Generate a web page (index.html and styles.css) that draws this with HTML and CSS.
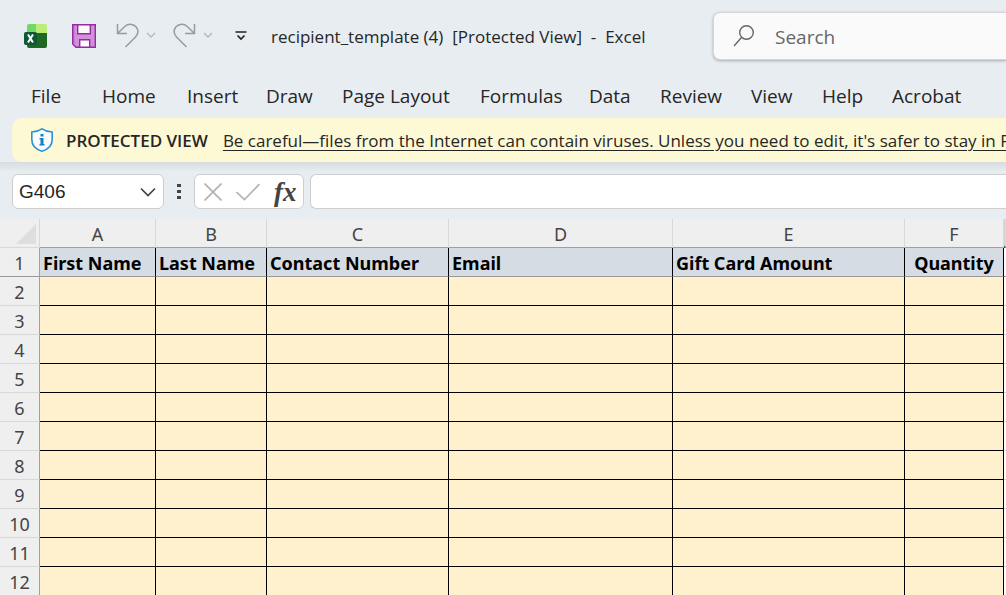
FILE: index.html
```html
<!DOCTYPE html>
<html lang="en">
<head>
<meta charset="utf-8">
<title>recipient_template (4) [Protected View] - Excel</title>
<link rel="stylesheet" href="styles.css">
</head>
<body>
<div class="app">
  <header class="titlebar">
    <div class="quick-access">
      <svg class="logo" width="24" height="24" viewBox="0 0 24 24" aria-hidden="true">
        <path d="M3 9V2q0-2 2-2h8v9z" fill="#70d866"/>
        <path d="M12 0h9q2 0 2 2v7H12z" fill="#bdec77"/>
        <path d="M3 9h20v13q0 2-2 2H5q-2 0-2-2z" fill="#1d6823"/>
        <path d="M3 9h9v3H3z" fill="#30923b"/>
        <rect x="0" y="8" width="13" height="13" rx="2" fill="#0c5837"/>
        <path d="M4 10.5l5 8M9 10.5l-5 8" stroke="#fff" stroke-width="2" fill="none"/>
      </svg>
      <button class="icon-button save" aria-label="Save">
        <svg width="24" height="24" viewBox="0 0 24 24">
          <path d="M.7.7h22.6v22.6H4L.7 20z" fill="#d28fdb" stroke="#942b9f" stroke-width="1.4"/>
          <path d="M5.7.7h12.6v9H5.7zM7.7 23.3v-7.6h10v7.6z" fill="#fafafa" stroke="#942b9f" stroke-width="1.4"/>
          <path d="M1.8 2v17.5" stroke="#b057ba"/>
        </svg>
      </button>
      <button class="icon-button undo" aria-label="Undo">
        <svg width="42" height="26" viewBox="0 0 42 26" fill="none" stroke="#989b9e" stroke-width="1.5">
          <path d="M1.5 1v9.5H11M1.5 10.5L9 3.2C12 .4 17 .5 20 3.8C22.600 7 22.200 11 19.500 14L9.500 24"/>
          <path d="M31 10l4 4 4-4" stroke="#b8bbbe"/>
        </svg>
      </button>
      <button class="icon-button redo" aria-label="Redo">
        <svg width="42" height="26" viewBox="0 0 42 26" fill="none" stroke="#989b9e" stroke-width="1.5">
          <path d="M21.500 1v9.500H12M21.500 10.500L14 3.200C11 .4 6 .5 3 3.800C.4 7 .8 11 3.500 14L13.500 24"/>
          <path d="M31 10l4 4 4-4" stroke="#b8bbbe"/>
        </svg>
      </button>
      <button class="icon-button more" aria-label="Customize Quick Access Toolbar">
        <svg width="12" height="10" viewBox="0 0 12 10" fill="none" stroke="#222" stroke-width="1.700">
          <path d="M.5 1h11M2.500 4.500L6 8l3.500-3.500"/>
        </svg>
      </button>
    </div>
    <div class="document-title">recipient_template (4)&nbsp; [Protected View]&nbsp; -&nbsp; Excel</div>
    <label class="search">
      <svg width="22" height="22" viewBox="0 0 22 22" fill="none" stroke="#666" stroke-width="1.400" aria-hidden="true">
        <circle cx="13.500" cy="7.500" r="6.800"/><path d="M8.500 12.500L1 21"/>
      </svg>
      <input type="search" placeholder="Search" aria-label="Search">
    </label>
  </header>

  <nav class="tabs" aria-label="Ribbon">
    <button>File</button><button>Home</button><button>Insert</button><button>Draw</button><button>Page Layout</button><button>Formulas</button><button>Data</button><button>Review</button><button>View</button><button>Help</button><button>Acrobat</button>
  </nav>

  <div class="notice">
    <svg width="22" height="24" viewBox="0 0 22 24" aria-hidden="true">
      <path d="M11 .8Q15.500 3.800 21.200 4v7.500C21.200 17.500 17 21.500 11 23.200C5 21.500.8 17.500.8 11.500V4Q6.500 3.800 11 .8z" fill="#fafcfd" stroke="#2a92d2" stroke-width="1.600"/>
      <path d="M9.500 6h3v2.500h-3zM8.500 10h4v7h-3v-5.500h-1zM8.500 16h5v1.500h-5z" fill="#1680c6"/>
    </svg>
    <strong>PROTECTED VIEW</strong>
    <a href="#protected-view">Be careful—files from the Internet can contain viruses. Unless you need to edit, it's safer to stay in Protected View.</a>
  </div>

  <div class="formula-bar">
    <label class="name-box">
      <input type="text" value="G406" aria-label="Name box">
      <svg width="16" height="10" viewBox="0 0 16 10" fill="none" stroke="#444" stroke-width="1.700" aria-hidden="true"><path d="M1 1.500l7 7 7-7"/></svg>
    </label>
    <svg class="grip" width="4" height="16" viewBox="0 0 4 16" fill="#444" aria-hidden="true"><path d="M0 0h4v3H0zM0 6h4v3H0zM0 12h4v3H0z"/></svg>
    <div class="formula-actions">
      <button aria-label="Cancel"><svg width="18" height="18" viewBox="0 0 18 18" fill="none" stroke="#b2b2b2" stroke-width="1.700"><path d="M.5.5l17 17M17.500.5l-17 17"/></svg></button>
      <button aria-label="Enter"><svg width="24" height="18" viewBox="0 0 24 18" fill="none" stroke="#b2b2b2" stroke-width="1.700"><path d="M.5 9l8 7.500 15-15.500"/></svg></button>
      <button class="function" aria-label="Insert function">fx</button>
    </div>
    <input class="formula-input" type="text" aria-label="Formula">
  </div>

  <main class="sheet">
    <table>
      <colgroup><col class="col-row"><col class="col-a"><col class="col-b"><col class="col-c"><col class="col-d"><col class="col-e"><col class="col-f"><col></colgroup>
      <thead>
        <tr><th class="corner"><svg width="20" height="20" viewBox="0 0 20 20" aria-hidden="true"><path d="M20 0v20H0z" fill="#dedede"/></svg></th><th>A</th><th>B</th><th>C</th><th>D</th><th>E</th><th>F</th><th class="selected"></th></tr>
      </thead>
      <tbody>
        <tr class="titles"><th>1</th><td>First Name</td><td>Last Name</td><td>Contact Number</td><td>Email</td><td>Gift Card Amount</td><td class="centered">Quantity</td><td></td></tr>
        <tr><th>2</th><td></td><td></td><td></td><td></td><td></td><td></td><td></td></tr>
        <tr><th>3</th><td></td><td></td><td></td><td></td><td></td><td></td><td></td></tr>
        <tr><th>4</th><td></td><td></td><td></td><td></td><td></td><td></td><td></td></tr>
        <tr><th>5</th><td></td><td></td><td></td><td></td><td></td><td></td><td></td></tr>
        <tr><th>6</th><td></td><td></td><td></td><td></td><td></td><td></td><td></td></tr>
        <tr><th>7</th><td></td><td></td><td></td><td></td><td></td><td></td><td></td></tr>
        <tr><th>8</th><td></td><td></td><td></td><td></td><td></td><td></td><td></td></tr>
        <tr><th>9</th><td></td><td></td><td></td><td></td><td></td><td></td><td></td></tr>
        <tr><th>10</th><td></td><td></td><td></td><td></td><td></td><td></td><td></td></tr>
        <tr><th>11</th><td></td><td></td><td></td><td></td><td></td><td></td><td></td></tr>
        <tr><th>12</th><td></td><td></td><td></td><td></td><td></td><td></td><td></td></tr>
      </tbody>
    </table>
  </main>
</div>
</body>
</html>
```

FILE: styles.css
```css
* { box-sizing: border-box; }
body {
  margin: 0;
  background: #e8edf1;
  color: #262626;
  font-family: "Open Sans", "Noto Sans", sans-serif;
  font-size: 18px;
}
button, input { font: inherit; color: inherit; border: 0; padding: 0; background: none; }
svg { display: block; flex: none; }
.app { height: 100vh; overflow: hidden; display: flex; flex-direction: column; }

.titlebar { display: flex; align-items: center; height: 72px; padding-left: 24px; flex: none; }
.quick-access { display: flex; align-items: center; width: 247px; flex: none; }
.save { margin-left: 24px; }
.undo { margin-left: 20px; }
.redo { margin-left: 15px; }
.more { margin-left: 20px; }
.document-title { width: 442px; flex: none; font-size: 17px; white-space: nowrap; }
.search {
  flex: 1;
  min-width: 0;
  display: flex;
  align-items: center;
  gap: 20px;
  height: 48px;
  padding-left: 19px;
  background: #fafafa;
  border: 1px solid #d4d6d9;
  border-right: 0;
  border-radius: 7px 0 0 7px;
  box-shadow: 0 1px 3px #a8abae;
}
.search input { flex: 1; min-width: 0; padding-top: 2px; font-size: 19px; outline: 0; }
.search input::placeholder { color: #666; opacity: 1; }

.tabs {
  display: grid;
  grid-template-columns: 71px 85px 79px 76px 138px 109px 71px 91px 71px 70px auto;
  height: 46px;
  padding: 2px 0 0 31px;
  flex: none;
}
.tabs button { text-align: left; font-size: 19px; white-space: nowrap; }

.notice {
  display: flex;
  align-items: center;
  height: 44px;
  margin-left: 12px;
  padding-left: 19px;
  flex: none;
  overflow: hidden;
  white-space: nowrap;
  background: #fef9d5;
  border-radius: 10px 0 0 10px;
}
.notice strong { margin: 0 15px 0 13px; font-size: 17px; font-weight: 600; }
.notice a { color: inherit; font-size: 17px; text-underline-offset: 3px; text-decoration-thickness: 1px; }

.formula-bar {
  display: flex;
  align-items: center;
  height: 57px;
  padding: 2px 0 0 12px;
  flex: none;
  background: linear-gradient(#d7dce0, #e8edf1 10px);
}
.name-box, .formula-actions, .formula-input {
  height: 35px;
  background: #fff;
  border: 1px solid #ccced0;
  border-radius: 6px;
}
.name-box { display: flex; align-items: center; width: 152px; padding: 0 7px 0 6px; font-family: "Liberation Sans", sans-serif; font-size: 19px; }
.name-box input { flex: 1; min-width: 0; padding-top: 1px; }
.grip { margin: 0 13px; }
.formula-actions { display: flex; align-items: center; gap: 14px; width: 110px; padding-left: 9px; margin-right: 6px; }
.function { font-family: "Liberation Serif", serif; font-style: italic; font-weight: 700; font-size: 27px; line-height: 32px; color: #444; }
.formula-input { flex: 1; min-width: 0; border-right: 0; border-radius: 6px 0 0 6px; }

.sheet { flex: 1; min-height: 0; overflow: hidden; background: #fff; }
table { width: 100%; table-layout: fixed; border-collapse: separate; border-spacing: 0; font-family: "Noto Sans", sans-serif; }
.col-row { width: 40px; }
.col-a { width: 116px; }
.col-b { width: 111px; }
.col-c { width: 182px; }
.col-d { width: 224px; }
.col-e { width: 232px; }
.col-f { width: 99px; }
th, td { height: 29px; padding: 2px 0 0; line-height: 26px; white-space: nowrap; overflow: hidden; }
th { background: #efefef; color: #444; font-weight: 400; font-size: 18px; }
thead th { border-right: 1px solid #d8d8d8; border-bottom: 1px solid #a0a0a0; }
thead .corner { padding-left: 16px; border-bottom-color: #d8d8d8; }
thead .selected { background: #d5d5d5; border-bottom: 2px solid #217346; }
tbody th { border-right: 1px solid #a0a0a0; border-bottom: 1px solid #d8d8d8; }
td { background: #fff0ce; border-right: 1px solid #000; border-bottom: 1px solid #000; }
td:last-child { background: #fff; border-right: 0; border-bottom-color: #d8d8d8; }
.titles td { padding-left: 3px; background: #d5dce4; color: #000; font-weight: 700; font-size: 18px; }
.titles td:last-child { padding: 0; background: #fff; }
.titles th, .titles td { border-bottom-color: #999; }
.titles .centered { padding-left: 0; text-align: center; }
```
